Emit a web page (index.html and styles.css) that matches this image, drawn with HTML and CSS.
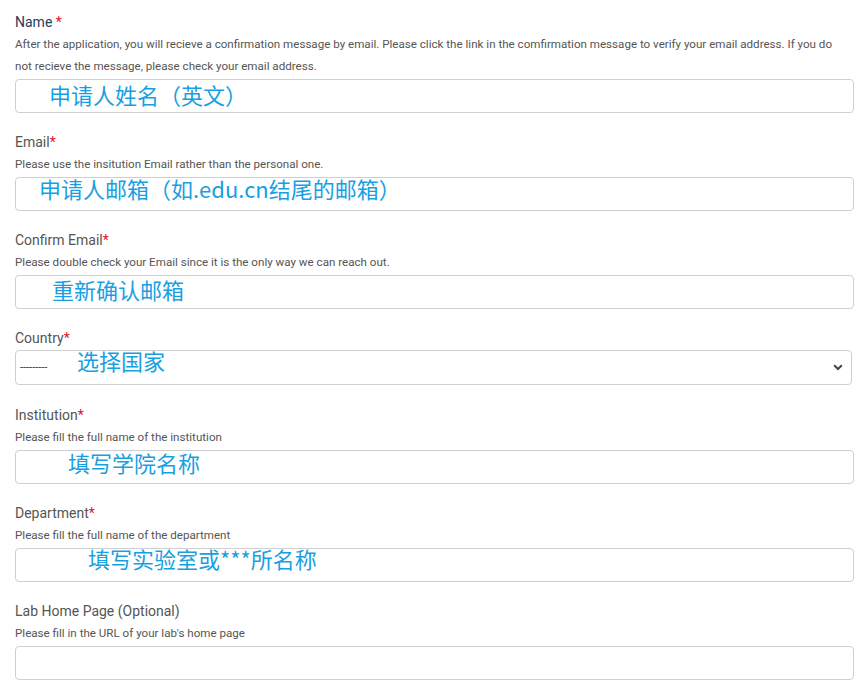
FILE: index.html
```html
<!DOCTYPE html>
<html>
<head>
<meta charset="utf-8">
<link rel="stylesheet" href="styles.css">
</head>
<body>
<form class="form">
  <div class="group">
    <label class="label label-name">Name <span class="req">*</span></label>
    <div class="help">After the application, you will recieve a confirmation message by email. Please click the link in the comfirmation message to verify your email address. If you do not recieve the message, please check your email address.</div>
    <div class="box f-name"><span class="note">申请人姓名（英文）</span></div>
  </div>
  <div class="group">
    <label class="label">Email<span class="req">*</span></label>
    <div class="help">Please use the insitution Email rather than the personal one.</div>
    <div class="box f-email"><span class="note">申请人邮箱（如.edu.cn结尾的邮箱）</span></div>
  </div>
  <div class="group">
    <label class="label">Confirm Email<span class="req">*</span></label>
    <div class="help">Please double check your Email since it is the only way we can reach out.</div>
    <div class="box f-confirm"><span class="note">重新确认邮箱</span></div>
  </div>
  <div class="group group-select">
    <label class="label label-select">Country<span class="req">*</span></label>
    <div class="box select">
      <span class="dashes">---------</span>
      <span class="note note-country">选择国家</span>
      <svg class="chev" width="10" height="7" viewBox="0 0 10 7"><path d="M1.2 1.3 L5 5 L8.8 1.3" fill="none" stroke="#444" stroke-width="2"/></svg>
    </div>
  </div>
  <div class="group">
    <label class="label">Institution<span class="req">*</span></label>
    <div class="help">Please fill the full name of the institution</div>
    <div class="box f-inst"><span class="note">填写学院名称</span></div>
  </div>
  <div class="group">
    <label class="label">Department<span class="req">*</span></label>
    <div class="help">Please fill the full name of the department</div>
    <div class="box f-dept"><span class="note">填写实验室或***所名称</span></div>
  </div>
  <div class="group">
    <label class="label">Lab Home Page (Optional)</label>
    <div class="help">Please fill in the URL of your lab's home page</div>
    <div class="box"></div>
  </div>
</form>
</body>
</html>
```
FILE: styles.css
```css
html, body {
  margin: 0;
  padding: 0;
  background: #fff;
}
body {
  font-family: Roboto, "Liberation Sans", sans-serif;
  color: #555;
}
.form {
  padding: 12px 14px 0 15px;
  width: 839px;
}
.group {
  display: flex;
  flex-direction: column;
  margin-bottom: 19px;
}
.group-select {
  margin-bottom: 20px;
}
.label {
  display: block;
  font-size: 14px;
  line-height: 21px;
  color: #555;
}
.label-name {
  color: #1f3b5c;
}
.req {
  color: #e8102a;
}
.help {
  font-size: 11.6px;
  line-height: 22px;
  color: #555;
  margin-bottom: 2px;
  max-width: 830px;
}
.label-select {
  margin-bottom: 1px;
}
.box {
  box-sizing: border-box;
  height: 34px;
  border: 1px solid #cfcfcf;
  border-radius: 4px;
  display: flex;
  align-items: center;
  background: #fff;
}
.note {
  font-family: "Noto Sans CJK SC", "Noto Sans", sans-serif;
  font-size: 22px;
  line-height: 1;
  color: #189fe2;
  white-space: nowrap;
}
.f-name { padding-left: 33px; padding-bottom: 5px; }
.f-email { padding-left: 23px; padding-bottom: 12px; }
.f-confirm { padding-left: 36px; padding-bottom: 6px; }
.f-inst { padding-left: 52px; padding-bottom: 10px; }
.f-dept { padding-left: 72px; padding-bottom: 14px; }
.select {
  height: 35px;
  width: 837px;
  padding-left: 4px;
  padding-right: 8px;
  position: relative;
}
.dashes {
  font-size: 11px;
  color: #333;
  width: 57px;
}
.note-country {
  position: relative;
  top: -8px;
}
.chev {
  margin-left: auto;
}
```
